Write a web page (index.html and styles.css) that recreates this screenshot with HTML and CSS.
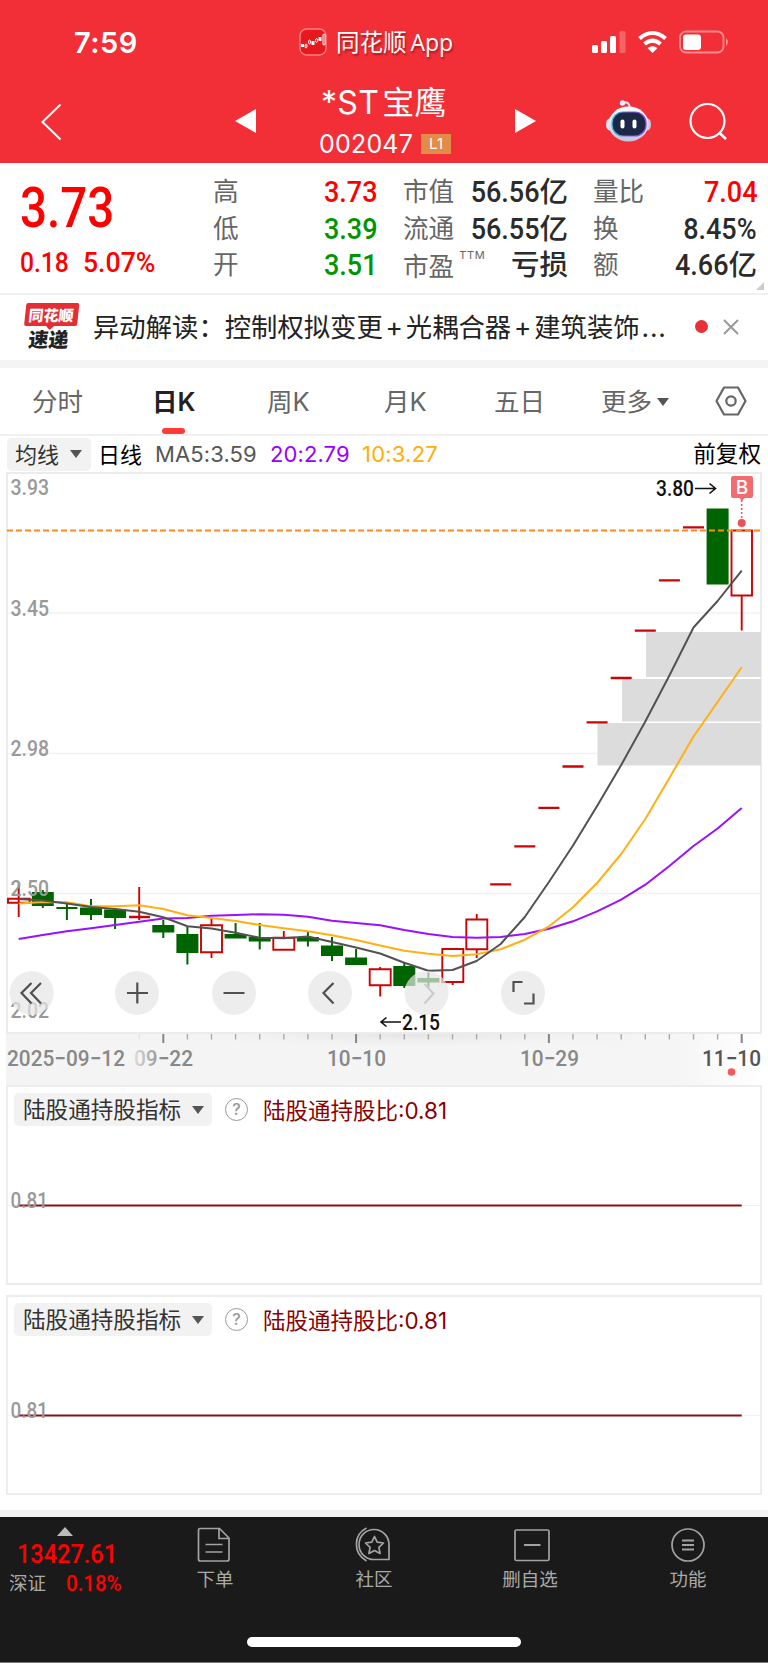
FILE: index.html
```html
<!DOCTYPE html>
<html lang="zh-CN">
<head>
<meta charset="utf-8">
<title>*ST宝鹰 002047</title>
<link rel="stylesheet" href="styles.css">
</head>
<body>
<header class="header">
  <div class="status">
    <span class="time">7:59</span>
    <div class="app">
      <svg width="28" height="28" viewBox="0 0 28 28"><rect x="1" y="1" width="26" height="26" rx="6.5" fill="#e6191f" stroke="#f98085" stroke-width="1.4"/><g fill="#fff"><rect x="2" y="16" width="3" height="3"/><rect x="12.500" y="13" width="3" height="4"/><rect x="19.500" y="9" width="3" height="4"/></g><g fill="none" stroke="#fff"><ellipse cx="7" cy="18" rx="1" ry="2"/><ellipse cx="10.500" cy="14" rx="1" ry="2"/><ellipse cx="17.500" cy="12.500" rx="1" ry="2"/><rect x="24" y="6" width="2" height="11" rx="1"/></g></svg>
      <span class="app-name">同花顺<span class="app-latin">App</span></span>
    </div>
    <svg class="signals" width="138" height="24" viewBox="591 30 138 24">
      <g fill="#fff"><rect x="592" y="45" width="6" height="8" rx="1.500"/><rect x="601" y="41" width="6" height="12" rx="1.500"/><rect x="610" y="36" width="6" height="17" rx="1.500"/><rect x="619.500" y="31" width="6" height="22" rx="1.500" opacity=".25"/></g>
      <g fill="none" stroke="#fff" stroke-width="4"><path d="M639.500 38.500c8-7.500 18-7.500 26 0"/><path d="M644.500 44c5.500-4.600 10.500-4.600 16 0"/></g><path d="M652.500 53l-5-5q5-3.600 10 0z" fill="#fff"/>
      <rect x="680" y="31.500" width="43.500" height="21" rx="6" fill="none" stroke="#f88b8f" stroke-width="1.800"/><rect x="683" y="34.500" width="18" height="15.500" rx="3" fill="#fff"/><path d="M726 38q4 4 0 8z" fill="#f88b8f"/>
    </svg>
  </div>
  <nav class="nav">
    <svg width="22" height="38" viewBox="41 103 22 38"><path d="M60.500 104.500L42.500 122l18 17.500" fill="none" stroke="#fff" stroke-width="2"/></svg>
    <svg class="prev" width="21" height="24" viewBox="0 0 21 24"><path d="M0 12L21 0v24z" fill="#fff"/></svg>
    <div class="title">
      <div class="name"><span>*ST</span><span class="name-cn">宝鹰</span></div>
      <div class="code"><span>002047</span><span class="level">L1</span></div>
    </div>
    <svg class="next" width="21" height="24" viewBox="0 0 21 24"><path d="M21 12L0 0v24z" fill="#fff"/></svg>
    <svg class="robot" width="48" height="44" viewBox="604 99 48 44">
      <defs><linearGradient id="head" x1="0" y1="0" x2="0" y2="1"><stop offset="0" stop-color="#fff"/><stop offset="1" stop-color="#c5c3e4"/></linearGradient><linearGradient id="rim"><stop offset="0" stop-color="#39c5dc"/><stop offset=".5" stop-color="#7467d9"/><stop offset="1" stop-color="#9c43df"/></linearGradient></defs>
      <path d="M623 103c4-1.500 6.500 0 7 5" fill="none" stroke="#dddcf2" stroke-width="2.200"/><circle cx="622.500" cy="103" r="2.700" fill="#f1efff"/>
      <ellipse cx="609.500" cy="124.500" rx="3.500" ry="6" fill="#e4e3f6"/><ellipse cx="647.500" cy="124.500" rx="3.500" ry="6" fill="#c9c6ed"/>
      <ellipse cx="628.500" cy="124" rx="20" ry="17.500" fill="url(#head)"/><rect x="612" y="112" width="34" height="24" rx="11" fill="#1d2746" stroke="url(#rim)" stroke-width="1.200"/>
      <rect x="620.500" y="119.500" width="4" height="9" rx="2" fill="#fff"/><rect x="632.500" y="119.500" width="4" height="9" rx="2" fill="#fff"/>
    </svg>
    <svg class="search" width="38" height="38" viewBox="689 102 38 38"><circle cx="707.500" cy="121" r="17" fill="none" stroke="#fff" stroke-width="2.200"/><path d="M719 132.500l7 6.500" stroke="#fff" stroke-width="2.600"/></svg>
  </nav>
</header>

<section class="quote">
  <div class="last">
    <div class="price"><span class="din">3.73</span></div>
    <div class="change"><span class="din">0.18</span><span class="din pct">5.07%</span></div>
  </div>
  <dl class="stats s1">
    <div><dt>高</dt><dd class="up"><span class="din">3.73</span></dd></div>
    <div><dt>低</dt><dd class="down"><span class="din">3.39</span></dd></div>
    <div><dt>开</dt><dd class="down"><span class="din">3.51</span></dd></div>
  </dl>
  <dl class="stats s2">
    <div><dt>市值</dt><dd><span class="din">56.56</span>亿</dd></div>
    <div><dt>流通</dt><dd><span class="din">56.55</span>亿</dd></div>
    <div><dt class="pe">市盈<sup>TTM</sup></dt><dd>亏损</dd></div>
  </dl>
  <dl class="stats s3">
    <div><dt>量比</dt><dd class="up"><span class="din">7.04</span></dd></div>
    <div><dt>换</dt><dd><span class="din">8.45%</span></dd></div>
    <div><dt>额</dt><dd><span class="din">4.66</span>亿</dd></div>
  </dl>
  <i class="corner"></i>
</section>

<section class="news">
  <div class="brand"><div class="brand-top">同花顺</div><div class="brand-tip"></div><div class="brand-bottom">速递</div></div>
  <p class="headline">异动解读：控制权拟变更<b>+</b>光耦合器<b>+</b>建筑装饰<em>...</em></p>
  <i class="dot"></i>
  <svg class="close" width="16" height="16" viewBox="0 0 16 16"><path d="M1 1l14 14M15 1L1 15" stroke="#999" stroke-width="2"/></svg>
</section>

<nav class="tabs">
  <span class="t1">分时</span><span class="t2 active">日K</span><span class="t3">周K</span><span class="t4">月K</span><span class="t5">五日</span><span class="t6">更多<i class="caret"></i></span>
  <svg class="hex" width="32" height="30" viewBox="0 0 32 30"><path d="M9 1.500h14L30.500 15 23 28.500H9L1.500 15z" fill="none" stroke="#666" stroke-width="2.200" stroke-linejoin="round"/><circle cx="16" cy="15" r="4.700" fill="none" stroke="#666" stroke-width="2.200"/></svg>
</nav>

<section class="legend">
  <span class="pill"><span class="lift">均线</span><i class="caret"></i></span>
  <span class="period">日线</span>
  <span class="ma5">MA5:3.59</span><span class="ma20">20:2.79</span><span class="ma10">10:3.27</span>
  <span class="adjust">前复权</span>
</section>

<svg class="chart" width="768" height="562" viewBox="0 472 768 562">
  <g stroke="#f2f2f2" stroke-width="1.500"><path d="M8 613H761M8 753.500H761M8 893.500H761"/></g>
  <rect x="7" y="473" width="754" height="560" fill="none" stroke="#ececec" stroke-width="2"/>
  <g fill="#dcdcdc"><rect x="646" y="632" width="115" height="45"/><rect x="622" y="679" width="139" height="42.500"/><rect x="597.500" y="723" width="163.500" height="42.500"/></g>
  <g stroke="#006400" stroke-width="2">
    <path d="M42.800 890V908M66.900 904V920M91 899V920M115.100 909V929M163.300 920V938M187.400 927V964.500M235.600 923V938M259.700 923V949.500M307.900 932V946.500M332 937V961M356.100 949V965M404.300 963V988M428.400 972.500V988"/>
    <path d="M56.400 908H77.400"/>
  </g>
  <g fill="#006400"><rect x="31.800" y="892" width="22" height="14"/><rect x="80" y="907.500" width="22" height="7.500"/><rect x="104.100" y="909.500" width="22" height="8.500"/><rect x="152.300" y="925" width="22" height="7.500"/><rect x="176.400" y="934" width="22" height="19"/><rect x="224.600" y="934" width="22" height="4.500"/><rect x="248.700" y="937" width="22" height="4.500"/><rect x="296.900" y="937" width="22" height="4.500"/><rect x="321" y="945.500" width="22" height="10.500"/><rect x="345.100" y="957.500" width="22" height="7.500"/><rect x="393.300" y="966" width="22" height="20"/><rect x="417.400" y="978" width="22" height="4.500"/><rect x="706.600" y="508.500" width="22" height="76"/></g>
  <g fill="none" stroke="#cc0404" stroke-width="1.900">
    <path d="M18.700 884V917M139.200 887V920M211.500 918.500V925M211.500 953V958M283.800 931V938M380.200 967V969M380.200 986V996.500M452.700 982V985M476.700 914V919M476.700 950V958M741.700 596V630.500"/>
    <path d="M8 898.700H29.700V902.700H8zM201 925.300H222V952.300H201zM273.300 937.700H294.300V949.700H273.300zM369.700 969.300H390.700V985.300H369.700zM442.300 949H463.300V982H442.300zM466.300 919.500H487.300V949.300H466.300zM731.500 530.500H752V595.500H731.500z"/>
    <path stroke-width="2.300" d="M129 917H150M490.200 884.300H511.200M514.300 846.300H535.300M538.400 807.800H559.400M562.500 766.500H583.500M586.600 722.300H607.600M610.700 678H631.700M634.800 630.700H655.800M658.900 580.300H679.900M683 527.300H704"/>
  </g>
  <path d="M7 530.500H761" stroke="#fa8b22" stroke-width="1.800" stroke-dasharray="6 3"/>
  <g fill="none" stroke-width="2" stroke-linejoin="round">
    <polyline stroke="#9b10ff" points="18.700,939 42.800,935 66.900,931.300 91,928.300 115.100,925 139.200,921.700 163.300,918.500 187.400,918 211.500,915.700 235.600,915 259.700,914.200 283.800,914.700 307.900,916.700 332,920.700 356.100,923 380.200,925.300 404.300,930 428.400,934 452.500,936.900 476.600,937.700 500.700,937 524.800,934 548.900,928.700 573,921.300 597.100,911.300 621.200,899.700 645.300,884.700 669.400,866 693.500,846 717.600,828.500 741.700,808"/>
    <polyline stroke="#ffb014" points="18.700,903.500 42.800,902 66.900,902.300 91,906.300 115.100,906.300 139.200,905.300 163.300,909 187.400,915.300 211.500,918 235.600,921 259.700,925 283.800,928.300 307.900,931.300 332,935.300 356.100,940 380.200,945.500 404.300,950.700 428.400,953.700 452.500,956 476.600,954.300 500.700,949.300 524.800,939.700 548.900,926.500 573,907.300 597.100,883 621.200,854 645.300,819 669.400,778 693.500,736.500 717.600,702 741.700,667.300"/>
    <polyline stroke="#525252" points="18.700,899 42.800,900.500 66.900,903.500 91,907 115.100,909 139.200,911.700 163.300,917.300 187.400,926.300 211.500,928.500 235.600,932.700 259.700,937.700 283.800,938.300 307.900,936.500 332,942 356.100,947.500 380.200,953.500 404.300,962.700 428.400,970.800 452.500,970 476.600,961 500.700,944 524.800,917 548.900,882 573,845.500 597.100,806 621.200,765 645.300,721.500 669.400,675.500 693.500,627.500 717.600,601 741.700,570.700"/>
  </g>
  <g class="scale">
    <text x="10.500" y="495" textLength="38.500" lengthAdjust="spacingAndGlyphs">3.93</text><text x="10.500" y="616" textLength="38.500" lengthAdjust="spacingAndGlyphs">3.45</text><text x="10.500" y="756" textLength="38.500" lengthAdjust="spacingAndGlyphs">2.98</text><text x="10.500" y="896" textLength="38.500" lengthAdjust="spacingAndGlyphs">2.50</text><text x="10.500" y="1018" textLength="38.500" lengthAdjust="spacingAndGlyphs">2.02</text>
  </g>
  <g class="mark"><text x="656" y="496" textLength="38" lengthAdjust="spacingAndGlyphs">3.80</text><text x="402" y="1030" textLength="38" lengthAdjust="spacingAndGlyphs">2.15</text></g>
  <path d="M695 488.500H716M709.500 483.500l6 5-6 5M401 1022H381M386.500 1017.500l-5.500 4.500 5.500 4.500" fill="none" stroke="#111" stroke-width="1.600"/>
  <path d="M733 476h18q2 0 2 2v18q0 2-2 2h-6.500l-2.500 3-2.500-3H733q-2 0-2-2v-18q0-2 2-2z" fill="#f26b70"/>
  <text class="buy" x="742" y="494" text-anchor="middle">B</text>
  <path d="M741.700 500V520" stroke="#f05a60" stroke-width="1.600" stroke-dasharray="2 2"/><circle cx="741.700" cy="523" r="4" fill="#ee5057"/>
  <g fill="#e5e5e5" fill-opacity=".7"><circle cx="31.700" cy="993" r="22"/><circle cx="137" cy="993" r="22"/><circle cx="234" cy="993" r="22"/><circle cx="330" cy="993" r="22"/><circle cx="426.500" cy="993" r="22"/><circle cx="523" cy="993" r="22"/></g>
  <g fill="none" stroke="#505050" stroke-width="2.200"><path d="M31.500 983L21.500 993l10 10.500M41 983L31 993l10 10.500M127 993h21M137.300 982.500v21M223.500 993h21M333.500 983l-10 10 10 10.500M513.500 992v-10h9M524 1003.500h9.500v-10"/><path d="M424.500 984l9 9.500-9 10" stroke="#cbcbcb"/></g>
</svg>

<svg class="axis" width="768" height="51" viewBox="0 1034 768 51">
  <defs>
    <linearGradient id="fade"><stop offset="0" stop-color="#f4f4f4"/><stop offset=".88" stop-color="#f5f5f5"/><stop offset="1" stop-color="#fff"/></linearGradient>
    <radialGradient id="shade" cx=".5" cy="0" r=".5"><stop offset="0" stop-color="#e4e4e4"/><stop offset="1" stop-color="#f4f4f4" stop-opacity="0"/></radialGradient>
    <linearGradient id="word"><stop offset="0" stop-color="#ddd"/><stop offset=".5" stop-color="#888"/></linearGradient>
  </defs>
  <rect x="6" y="1034" width="756" height="51" fill="url(#fade)"/><rect x="130" y="1034" width="560" height="32" fill="url(#shade)"/>
  <path stroke="#aaa" stroke-width="1.400" d="M187.400 1034v5.500M211.500 1034v5.500M235.600 1034v5.500M259.700 1034v5.500M283.800 1034v5.500M307.900 1034v5.500M332 1034v5.500M380.200 1034v5.500M404.300 1034v5.500M428.400 1034v5.500M452.500 1034v5.500M476.600 1034v5.500M500.700 1034v5.500M524.800 1034v5.500M573 1034v5.500M597.100 1034v5.500M621.200 1034v5.500M645.300 1034v5.500M669.400 1034v5.500M693.500 1034v5.500M717.600 1034v5.500"/>
  <path d="M139.200 1034v5.500" stroke="#ddd"/><path stroke="#858585" stroke-width="2" d="M163.300 1034v9M356.100 1034v9M548.900 1034v9M741.700 1034v9"/>
  <g class="dates"><text x="7" y="1066" textLength="118" lengthAdjust="spacingAndGlyphs">2025−09−12</text><text x="134" y="1066" textLength="59" lengthAdjust="spacingAndGlyphs" fill="url(#word)">09−22</text><text x="327" y="1066" textLength="59" lengthAdjust="spacingAndGlyphs">10−10</text><text x="520" y="1066" textLength="59" lengthAdjust="spacingAndGlyphs">10−29</text><text class="today" x="702" y="1066" textLength="59" lengthAdjust="spacingAndGlyphs">11−10</text></g>
  <circle cx="731.500" cy="1072" r="3.800" fill="#f7585c"/>
</svg>

<section class="panel">
  <div class="panel-head"><span class="pill"><span class="lift">陆股通持股指标</span><i class="caret"></i></span><span class="help">?</span><span class="holding">陆股通持股比<span>:0.81</span></span></div>
  <svg class="flat" width="752" height="40" viewBox="8 1185 752 40"><path d="M8 1205.500H760" stroke="#f2f2f2"/><path d="M18.700 1205.500H741.700" stroke="#8b1015" stroke-width="2"/><g class="scale"><text x="10.500" y="1208" textLength="37.500" lengthAdjust="spacingAndGlyphs">0.81</text></g></svg>
</section>
<section class="panel">
  <div class="panel-head"><span class="pill"><span class="lift">陆股通持股指标</span><i class="caret"></i></span><span class="help">?</span><span class="holding">陆股通持股比<span>:0.81</span></span></div>
  <svg class="flat" width="752" height="40" viewBox="8 1185 752 40"><path d="M8 1205.500H760" stroke="#f2f2f2"/><path d="M18.700 1205.500H741.700" stroke="#8b1015" stroke-width="2"/><g class="scale"><text x="10.500" y="1208" textLength="37.500" lengthAdjust="spacingAndGlyphs">0.81</text></g></svg>
</section>
<div class="strip"></div>

<footer class="footer">
  <div class="bar">
    <div class="index">
      <i class="rise"></i>
      <div class="index-value"><span class="din">13427.61</span></div>
      <div class="index-row"><span>深证</span><span class="din">0.18%</span></div>
    </div>
    <div class="item i1"><svg width="36" height="38" viewBox="1.500 0 36 38"><path d="M4.500 2.500H24L33.500 12V33q0 2-2 2H5q-2 0-2-2V4.500q0-2 1.500-2zM23.500 3v9.500h10M10 18.500h17M10 26h17"/></svg><span>下单</span></div>
    <div class="item i2"><svg width="38" height="38" viewBox="2 0 38 38"><path d="M13.500 2C0 9 0 27 13.500 35M21.500 33.500A15 15 0 1 1 36 19V33.500zM21.500 10.500l2.700 5.700 6.300.8-4.600 4.300 1.200 6.200-5.600-3-5.600 3 1.200-6.200-4.600-4.300 6.300-.8z" stroke-linejoin="round"/></svg><span>社区</span></div>
    <div class="item i3"><svg width="40" height="38" viewBox="-5 0 40 38"><rect x="0" y="4" width="34" height="30.500" rx="1.500"/><path d="M9 19h16.500" stroke-width="2"/></svg><span>删自选</span></div>
    <div class="item i4"><svg width="36" height="38" viewBox="0 0 36 38"><circle cx="18" cy="19" r="16"/><path d="M12 14.500h12M12 19h12M12 23.500h12" stroke-width="2"/></svg><span>功能</span></div>
  </div>
  <div class="home"></div>
</footer>
</body>
</html>
```
FILE: styles.css
```css
* { box-sizing: border-box; }
body { margin: 0; width: 768px; background: #fff; color: #222; font-family: Inter, "Noto Sans CJK SC", sans-serif; }
svg { display: block; flex: none; }
i, em { font-style: normal; }
span, dt, dd { white-space: nowrap; }
.din { display: inline-block; font-family: Roboto, sans-serif; font-weight: 500; transform: scaleX(.88); transform-origin: right center; }

.header { height: 163px; background: #f22f37; color: #fff; }
.status { display: flex; align-items: center; height: 84px; padding-left: 74px; }
.time { width: 225px; padding-top: 1px; font-size: 29px; font-weight: 600; letter-spacing: .5px; }
.app { display: flex; align-items: center; gap: 9px; width: 292px; }
.app-name { font-size: 23.500px; line-height: 28px; text-shadow: 1px 2px 2px rgba(90, 0, 0, .5); }
.app-latin { margin-left: 4px; font-family: "Open Sans", sans-serif; font-size: 23px; }
.nav { display: flex; height: 79px; padding-left: 41px; }
.nav > svg { margin-top: 19px; }
.nav > .prev { margin: 25px 0 0 172px; }
.title { width: 259px; }
.name { display: flex; align-items: center; height: 37px; padding-left: 65px; font-size: 32px; letter-spacing: .3px; }
.name-cn { margin: -5px 0 0 3px; font-size: 32px; }
.code { display: flex; align-items: center; height: 44px; margin-left: 63px; gap: 8px; font-size: 25px; letter-spacing: .2px; }
.code span { position: relative; top: 1px; }
.level { width: 30px; height: 20px; background: #e38b48; font-size: 15px; line-height: 20px; text-align: center; }
.nav > .next { margin: 25px 0 0 0; }
.nav > .robot { margin: 15px 0 0 68px; }
.nav > .search { margin: 18px 0 0 37px; }

.quote { position: relative; display: flex; height: 132px; padding-top: 10px; border-bottom: 2px solid #f1f1f1; }
.last { width: 193px; padding-left: 20px; color: #f00; }
.last .din { transform-origin: left center; }
.price { height: 70px; font-size: 55px; line-height: 69px; }
.price .din { transform: scaleX(.865); }
.change { display: flex; height: 40px; font-size: 28px; line-height: 39px; }
.change .pct { margin-left: 7px; transform: scaleX(.95); }
.stats { margin: 0; width: 165px; }
.s1 { width: 164px; margin: 0 1px 0 20px; }
.s2, .s3 { margin-left: 25px; }
.s3 { width: 164px; }
.stats div { display: flex; justify-content: space-between; height: 36.700px; line-height: 37px; }
.stats dt { color: #666; font-size: 25.600px; }
.stats dd { display: flex; margin: 0; color: #2b2b2b; font-size: 28.500px; font-weight: 500; }
.stats dd .din { font-size: 30px; transform: scaleX(.9); }
.stats .up { color: #f00; }
.stats .down { color: #009600; }
.stats .pe { padding-top: 2px; }
.pe sup { position: relative; top: -17px; margin-left: 5px; font-size: 11px; line-height: 0; letter-spacing: .7px; vertical-align: baseline; }
.corner { position: absolute; right: 4px; bottom: 3px; border: 4.500px solid; border-color: transparent #ccc #ccc transparent; }

.news { display: flex; align-items: center; height: 73px; padding: 0 0 8px 23px; border-bottom: 8px solid #f4f4f4; }
.brand { display: flex; flex-direction: column; align-items: center; width: 54px; height: 46px; margin-top: 5px; font-family: "Noto Sans CJK SC", sans-serif; font-weight: 900; transform: skewX(-6deg); }
.brand-top { width: 53px; height: 23px; border-radius: 2px; background: #e52d33; color: #fff; font-size: 15px; line-height: 23px; text-align: center; }
.brand-tip { border: 4px solid transparent; border-top: 4px solid #e52d33; border-bottom: 0; }
.brand-bottom { font-size: 20px; line-height: 18px; color: #222; }
.headline { width: 584px; margin: 0 0 0 16px; padding-top: 6px; font-size: 26.350px; line-height: 40px; white-space: nowrap; }
.headline b { display: inline-block; width: 23px; text-align: center; font-weight: 400; }
.headline em { margin-left: 2px; letter-spacing: .8px; }
.dot { width: 13px; height: 13px; margin: 6px 0 0 18px; border-radius: 50%; background: #e83036; }
.close { margin: 6px 0 0 15px; }

.tabs { display: flex; height: 68px; border-bottom: 2px solid #f0f0f0; color: #666; font-size: 25.500px; line-height: 66px; }
.tabs span { display: flex; align-items: center; padding-top: 1px; }
.caret { width: 0; height: 0; border: 6px solid transparent; border-top: 8px solid #555; border-bottom: 0; }
.t1 { width: 120px; margin-left: 32px; }
.t2 { position: relative; width: 115px; }
.t3 { width: 117px; }
.t4 { width: 110px; }
.t5 { width: 107px; }
.t6 { width: 114px; gap: 5px; }
.tabs .active { color: #222; font-weight: 600; }
.active::after { content: ""; position: absolute; left: 10px; bottom: 0; width: 23px; height: 6px; border-radius: 3px; background: #ff3b36; }
.hex { margin-top: 18px; }

.legend { display: flex; align-items: center; height: 36px; padding: 0 7px; font-size: 22px; }
.pill { display: flex; align-items: center; height: 33px; padding: 0 9px 0 8px; gap: 11px; border-radius: 5px; background: #f2f2f2; color: #333; font-size: 22px; }
.lift { margin-top: -2px; }
.period { margin: -2px 0 0 7px; color: #000; }
.ma5 { width: 115px; margin-left: 13px; color: #555; letter-spacing: .1px; }
.ma20 { width: 92px; color: #9b00ff; letter-spacing: .1px; }
.ma10 { color: #ffae0a; letter-spacing: .2px; }
.adjust { margin: -3px 0 0 auto; color: #000; font-size: 22.600px; }
.scale { fill: #999; font: 500 22px Roboto, sans-serif; }
.mark { fill: #111; font: 500 22px Roboto, sans-serif; }
.buy { fill: #fff; font: 500 19px Inter, sans-serif; }
.dates { fill: #888; font: 500 22px Roboto, sans-serif; }
.today { fill: #555; }

.panel { width: 756px; height: 200px; margin: 0 0 10px 6px; border: 2px solid #ededed; }
.panel-head { display: flex; align-items: center; height: 35px; margin: 5px 0 0 6px; }
.panel .pill { width: 198px; padding-left: 9px; font-size: 22.600px; }
.help { width: 23px; height: 23px; margin: 0 15px 0 13px; border: 1.800px solid #999; border-radius: 50%; color: #999; font: 500 16px/20px Inter, sans-serif; text-align: center; }
.holding { margin-top: -1px; color: #8b0000; font-size: 22.500px; }
.flat { margin-top: 58px; }
.strip { height: 12px; border-bottom: 7px solid #f4f4f4; }

.footer { height: 146px; border-bottom: 1px solid #777; background: #1a1a1a; color: #aaa; }
.bar { display: flex; height: 120px; font-size: 18.500px; }
.index { width: 130px; color: #f00; }
.rise { display: block; width: 16px; margin: 10px 0 0 57px; border: 8px solid transparent; border-bottom: 9px solid #bbb; border-top: 0; }
.index .din { transform-origin: left center; }
.index-value { height: 34px; padding-left: 17px; font-size: 25px; line-height: 37px; }
.index-value .din { transform: scaleX(.94); }
.index-row { display: flex; gap: 20px; padding-left: 9px; line-height: 27px; }
.index-row span:first-child { color: #aaa; }
.index-row .din { font-size: 22.500px; transform: scaleX(.91); }
.item { display: flex; flex-direction: column; align-items: center; width: 156px; padding-top: 9px; line-height: 31px; }
.i1 { margin-left: 7px; }
.i2 { margin-left: 3px; }
.i4 { margin-left: 2px; }
.item svg { fill: none; stroke: #a3a3a3; stroke-width: 1.700; }
.home { width: 274px; height: 10px; margin-left: 247px; border-radius: 5px; background: #fff; }
```
